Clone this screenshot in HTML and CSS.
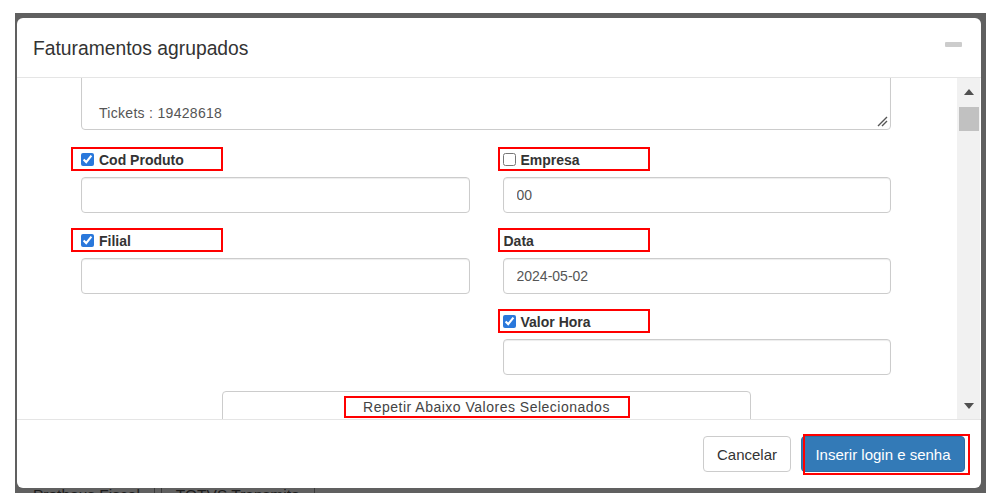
FILE: index.html
```html
<!DOCTYPE html>
<html lang="pt-BR">
<head>
<meta charset="utf-8">
<title>Faturamentos agrupados</title>
<link rel="stylesheet" href="styles.css">
</head>
<body>
<div class="screen">
  <div class="frame">
    <div class="behind">
      <span class="tab">Protheus Fiscal</span>
      <span class="sep"></span>
      <span class="sep"></span>
      <span class="tab">TOTVS Transmite</span>
      <span class="sep"></span>
    </div>
    <div class="modal">
      <div class="modal-header">
        <h4 class="modal-title">Faturamentos agrupados</h4>
        <span class="minimize"></span>
      </div>
      <div class="modal-body">
        <div class="scroll-content">
          <div class="textarea">
            <span class="ta-text">Tickets : 19428618</span>
            <svg class="grip" width="12" height="12" viewBox="0 0 12 12">
              <path d="M2 11 L11 2 M6 11 L11 6" stroke="#555" stroke-width="1.4" fill="none"/>
            </svg>
          </div>
          <div class="grid">
            <div class="col col-left">
              <div class="field">
                <label class="mark"><input type="checkbox" class="check" checked><span>Cod Produto</span></label>
                <input type="text" class="input">
              </div>
              <div class="field">
                <label class="mark"><input type="checkbox" class="check" checked><span>Filial</span></label>
                <input type="text" class="input">
              </div>
            </div>
            <div class="col col-right">
              <div class="field">
                <label class="mark"><input type="checkbox" class="check"><span>Empresa</span></label>
                <input type="text" class="input" value="00">
              </div>
              <div class="field">
                <label class="mark mark-plain"><span>Data</span></label>
                <input type="text" class="input" value="2024-05-02">
              </div>
              <div class="field">
                <label class="mark"><input type="checkbox" class="check" checked><span>Valor Hora</span></label>
                <input type="text" class="input">
              </div>
            </div>
          </div>
          <button class="repeat" type="button"><span class="repeat-mark">Repetir Abaixo Valores Selecionados</span></button>
        </div>
        <div class="scrollbar">
          <span class="arrow-up"></span>
          <span class="thumb"></span>
          <span class="spacer"></span>
          <span class="arrow-down"></span>
        </div>
      </div>
      <div class="modal-footer">
        <button class="btn btn-default" type="button">Cancelar</button>
        <button class="btn btn-primary" type="button">Inserir login e senha</button>
      </div>
    </div>
  </div>
</div>
</body>
</html>
```

FILE: styles.css
```css
* { box-sizing: border-box; }

html, body {
  margin: 0;
  padding: 0;
  background: #ffffff;
  font-family: "Liberation Sans", Arial, sans-serif;
  color: #333333;
}

.screen {
  width: 1003px;
  height: 501px;
  padding: 13px 0 0 15px;
  overflow: hidden;
}

.frame {
  position: relative;
  width: 971px;
  height: 480px;
  padding: 5px 0 0 2px;
  background: #606060;
  overflow: hidden;
}

.behind {
  position: absolute;
  left: 10px;
  top: 472px;
  display: flex;
  align-items: center;
  gap: 6px;
  font-size: 15.5px;
  line-height: 18px;
  color: #1c1c1c;
  white-space: nowrap;
}
.behind .sep {
  width: 1px;
  height: 20px;
  background: #3a3a3a;
}
.behind .tab { padding: 0 8px; }

.modal {
  position: relative;
  z-index: 1;
  width: 964px;
  height: 470px;
  background: #ffffff;
  border-radius: 6px;
  display: flex;
  flex-direction: column;
  overflow: hidden;
}

.modal-header {
  height: 60px;
  flex: none;
  padding: 1px 19px 0 16px;
  border-bottom: 1px solid #e5e5e5;
  display: flex;
  align-items: center;
  justify-content: space-between;
}

.modal-title {
  margin: 0;
  font-size: 19.3px;
  font-weight: normal;
  line-height: 27px;
  color: #333333;
}

.minimize {
  width: 17px;
  height: 5px;
  border-radius: 1px;
  background: #cccccc;
  margin-bottom: 8px;
}

.modal-body {
  flex: 1;
  min-height: 0;
  display: flex;
}

.scroll-content {
  flex: 1;
  min-width: 0;
  overflow: hidden;
  padding: 0 66px 0 64px;
}

.textarea {
  position: relative;
  height: 80px;
  margin-top: -28px;
  border: 1px solid #cccccc;
  border-radius: 4px;
  box-shadow: inset 0 1px 1px rgba(0,0,0,0.075);
  display: flex;
  align-items: flex-end;
  padding: 0 0 6px 17px;
}

.ta-text {
  font-size: 14px;
  line-height: 20px;
  color: #555555;
  letter-spacing: 0.3px;
}

.grip {
  position: absolute;
  right: 2px;
  bottom: 2px;
}

.grid {
  margin-top: 17px;
  display: grid;
  grid-template-columns: 1fr 1fr;
  column-gap: 33px;
  align-items: start;
}

.col {
  display: flex;
  flex-direction: column;
}

.field {
  display: flex;
  flex-direction: column;
  align-items: flex-start;
  margin-bottom: 15px;
}
.field:last-child { margin-bottom: 0; }

.mark {
  display: flex;
  align-items: center;
  gap: 5px;
  width: 152px;
  height: 24px;
  padding-top: 1px;
  border: 2px solid #ff0000;
  font-size: 14px;
  font-weight: bold;
  color: #333333;
}
.col-left .mark {
  margin-left: -10px;
  padding-left: 8px;
}
.col-right .mark {
  margin-left: -5px;
  padding-left: 3px;
}
.col-right .mark-plain { padding-left: 4px; }

.check {
  margin: 0 0 1px;
  width: 13px;
  height: 13px;
  accent-color: #2a78db;
  flex: none;
}

.input {
  width: 100%;
  height: 36px;
  margin-top: 6px;
  border: 1px solid #cccccc;
  border-radius: 4px;
  box-shadow: inset 0 1px 1px rgba(0,0,0,0.075);
  padding: 0 13px;
  font-family: "Liberation Sans", Arial, sans-serif;
  font-size: 14px;
  color: #555555;
  background: #ffffff;
  outline: none;
}

.repeat {
  display: flex;
  justify-content: center;
  width: 529px;
  height: 40px;
  margin: 16px auto 0;
  padding: 4px 0 0;
  border: 1px solid #cccccc;
  border-radius: 4px;
  background: #ffffff;
  font-family: "Liberation Sans", Arial, sans-serif;
  font-size: 14px;
  color: #444444;
}

.repeat-mark {
  display: block;
  width: 286px;
  height: 22px;
  margin-left: 1px;
  border: 2px solid #ff0000;
  line-height: 19px;
  text-align: center;
  letter-spacing: 0.5px;
}

.scrollbar {
  flex: none;
  width: 23px;
  margin-right: 1px;
  background: #f1f1f1;
  display: flex;
  flex-direction: column;
  align-items: center;
  padding: 11px 0 10px;
}

.arrow-up {
  width: 0;
  height: 0;
  border-left: 5px solid transparent;
  border-right: 5px solid transparent;
  border-bottom: 6px solid #505050;
}

.arrow-down {
  width: 0;
  height: 0;
  border-left: 5px solid transparent;
  border-right: 5px solid transparent;
  border-top: 6px solid #505050;
}

.thumb {
  width: 20px;
  height: 24px;
  margin-top: 12px;
  margin-left: 1px;
  background: #c1c1c1;
}

.spacer { flex: 1; }

.modal-footer {
  flex: none;
  height: 69px;
  border-top: 1px solid #e5e5e5;
  padding: 16px 16px 16px;
  display: flex;
  justify-content: flex-end;
  gap: 10px;
}

.btn {
  height: 36px;
  border-radius: 4px;
  font-family: "Liberation Sans", Arial, sans-serif;
  font-size: 15px;
  padding: 0;
  cursor: pointer;
}

.btn-default {
  width: 88px;
  background: #ffffff;
  border: 1px solid #cccccc;
  color: #333333;
}

.btn-primary {
  position: relative;
  width: 164px;
  background: #337ab7;
  border: 1px solid #2e6da4;
  color: #ffffff;
}
.btn-primary::after {
  content: "";
  position: absolute;
  top: -3px;
  left: 1px;
  right: -6px;
  bottom: -4px;
  border: 2px solid #ff0000;
}
```
